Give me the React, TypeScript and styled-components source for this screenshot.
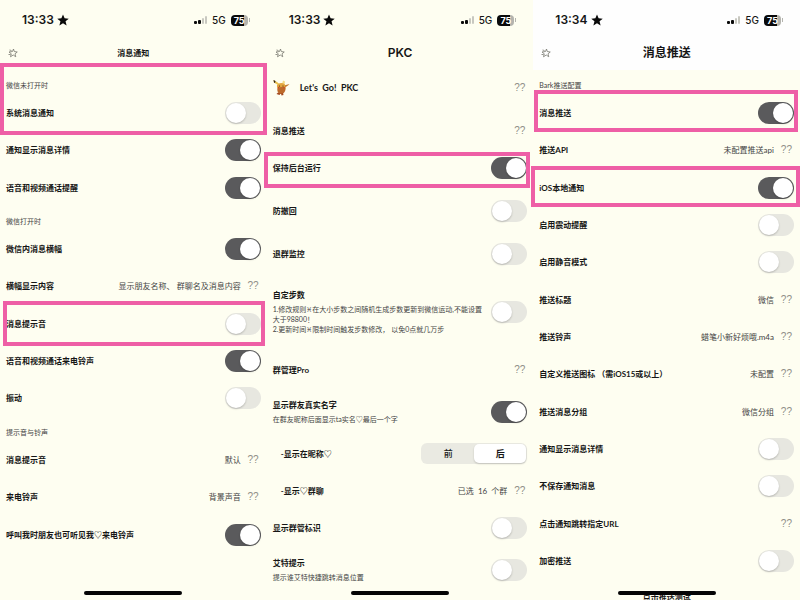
import React, { useId, useState } from "react";
import styled, { createGlobalStyle, css } from "styled-components";

const GlobalStyle = createGlobalStyle`
  *, *::before, *::after { box-sizing: border-box; }
  body {
    margin: 0;
    background: #fefef1;
    color: #161616;
    font-family: Lato, "Noto Sans CJK SC", sans-serif;
  }
  button, input { font: inherit; color: inherit; margin: 0; }
`;

const Page = styled.main`
  display: grid;
  grid-template-columns: repeat(3, 1fr);
  grid-template-rows: minmax(0, 1fr);
  height: 100vh;
  overflow: hidden;
`;

const Phone = styled.section`
  position: relative;
  min-width: 0;
`;

const Header = styled.header<{ $plain?: boolean }>`
  padding-bottom: 4px;
  background: ${(p) => (p.$plain ? "#fefefe" : "transparent")};
`;

const StatusBar = styled.div`
  display: flex;
  align-items: center;
  height: 40px;
  padding: 0 17px 0 22px;
  font-family: Inter, sans-serif;
`;

const Clock = styled.time`
  font-size: 12px;
  line-height: 16px;
  font-weight: 600;
`;

const StatusStar = styled.svg`
  width: 12px;
  height: 12px;
  margin-left: 3px;
`;

const Signal = styled.svg`
  width: 14px;
  height: 9px;
  margin-left: auto;
`;

const Network = styled.span`
  margin: 0 5px 0 4px;
  font-size: 10px;
  font-weight: 500;
`;

const Battery = styled.span`
  display: flex;
  align-items: center;
  justify-content: center;
  width: 17px;
  height: 11px;
  border-radius: 4px;
  background: linear-gradient(90deg, #0a0a0a 75%, #b4b4ae 75%);
  color: #fff;
  font-size: 9px;
  font-weight: 700;
`;

const BatteryTip = styled.span`
  width: 1px;
  height: 4px;
  margin-left: 1px;
  background: #b4b4ae;
`;

const NavBar = styled.div`
  display: grid;
  grid-template-columns: 1fr auto 1fr;
  align-items: center;
  height: 26px;
  padding: 0 8px;
`;

const BackButton = styled.button`
  display: flex;
  justify-self: start;
  padding: 0;
  border: 0;
  background: none;
`;

const Title = styled.h1<{ $large?: boolean }>`
  margin: 0;
  font-family: Inter, "Noto Sans CJK SC", sans-serif;
  font-size: ${(p) => (p.$large ? 12 : 8)}px;
  line-height: 16px;
  font-weight: 600;
`;

const SectionLabel = styled.h2`
  display: flex;
  align-items: flex-end;
  height: 24px;
  margin: 0;
  padding: 0 6px 4px;
  color: #444;
  font-size: 7px;
  line-height: 10px;
  font-weight: 400;
`;

const Group = styled.div`
  display: grid;
  grid-auto-rows: minmax(37px, auto) minmax(38px, auto) minmax(37px, auto);
`;

const Stack = styled.div`
  display: flex;
  flex-direction: column;
  gap: 6px;
  margin-top: -1px;
`;

const StackGroup = styled.div`
  display: grid;
`;

type RowStyle = { $indent?: boolean; $mark?: string; $tall?: boolean; $noted?: boolean };

const rowStyle = css<RowStyle>`
  position: relative;
  display: flex;
  align-items: center;
  width: 100%;
  min-height: ${(p) => (p.$tall ? 67 : p.$noted ? 35 : 37)}px;
  padding: 0 6px 0 ${(p) => (p.$indent ? 14 : 6)}px;
  ${(p) =>
    p.$mark &&
    css`
      &::after {
        content: "";
        position: absolute;
        z-index: 2;
        inset: ${p.$mark};
        border: 4px solid #ee5fa6;
        pointer-events: none;
      }
    `}
`;

const Row = styled.div<RowStyle>`
  ${rowStyle}
`;

const LinkRow = styled.button<RowStyle>`
  ${rowStyle}
  border: 0;
  background: none;
  text-align: left;
`;

const TextBlock = styled.div`
  flex: 1;
  min-width: 0;
`;

const RowLabel = styled.label`
  display: block;
  font-size: 8px;
  line-height: 12px;
  font-weight: 700;
  white-space: nowrap;
`;

const Note = styled.p`
  margin: 3px 0 0;
  color: #444;
  font-size: 7px;
  line-height: 10px;
  white-space: pre;
`;

const Value = styled.span`
  margin-left: auto;
  color: #444;
  font-size: 8px;
  line-height: 12px;
  white-space: nowrap;
`;

const Disclosure = styled.span`
  width: 18px;
  margin-right: 2px;
  color: #8f8f88;
  font-family: "Liberation Sans", sans-serif;
  font-size: 10px;
  line-height: 12px;
  text-align: right;
  white-space: nowrap;
`;

const AppName = styled.span`
  flex: 1;
  margin-left: 10px;
  font-size: 9px;
  line-height: 12px;
  font-weight: 700;
`;

const Switch = styled.input`
  appearance: none;
  flex: none;
  display: flex;
  align-items: center;
  width: 36px;
  height: 22px;
  padding: 1px;
  border-radius: 11px;
  background: #e7e7e0;

  &::before {
    content: "";
    width: 20px;
    height: 20px;
    border-radius: 50%;
    background: #fff;
    box-shadow: 0 1px 2px rgba(0, 0, 0, 0.22);
  }

  &:checked {
    justify-content: flex-end;
    background: #5a5a5c;
  }
`;

const Segments = styled.div`
  display: flex;
  width: 106px;
  height: 21px;
  padding: 1px;
  border-radius: 6px;
  background: #eaeae2;
`;

const Segment = styled.label`
  position: relative;
  display: flex;
  flex: 1;
  align-items: center;
  justify-content: center;
  border-radius: 5px;
  font-size: 9px;
  line-height: 12px;
  font-weight: 500;

  &:has(input:checked) {
    background: #fff;
    box-shadow: 0 1px 2px rgba(0, 0, 0, 0.18);
    font-weight: 700;
  }
`;

const SegmentInput = styled.input`
  position: absolute;
  inset: 0;
  appearance: none;
`;

const TestButton = styled.button`
  display: block;
  margin: 0 auto;
  padding: 12px 6px;
  border: 0;
  background: none;
  font-size: 8px;
  line-height: 12px;
  font-weight: 700;
`;

const HomeIndicator = styled.div`
  position: absolute;
  z-index: 3;
  bottom: 5px;
  left: 0;
  right: 0;
  width: 98px;
  height: 4px;
  margin: 0 auto;
  border-radius: 2px;
  background: #050505;
`;

function BackStar() {
  return (
    <svg width="10" height="10" viewBox="0 0 20 20" fill="none" stroke="#77776f" strokeWidth="1.6" strokeLinejoin="round">
      <path d="M11 2 L12.5 7 L18.5 8 L14 11.5 L15.5 17.5 L10.5 14 L5 17.5 L6.5 11.5 L2 8 L9 7 Z" />
      <path d="M3 4 L7 5 M1 13 L5 13" />
    </svg>
  );
}

function Mascot() {
  return (
    <svg width="17" height="17" viewBox="0 0 34 34" aria-hidden="true">
      <path d="M10 12 L2 7 L1 2 L8 6 L14 11 Z" fill="#e9c24d" />
      <path d="M1 2 L5 4 L4 8 L2 7 Z" fill="#2c2117" />
      <path d="M18 10 L20 3 L24 5 L23 12 Z" fill="#f3dc87" />
      <path d="M22 13 L33 10 L30 13 L24 17 Z" fill="#c47a2e" />
      <path d="M8 12 Q15 5 24 11 L25 19 Q20 23 12 21 Q7 18 8 12 Z" fill="#e3a63f" />
      <path d="M9 18 Q16 15 25 17 Q26 25 19 30 L14 30 Q7 26 9 18 Z" fill="#bd6a2b" />
      <path d="M10 27 L7 30 L13 32 L15 29 Z M16 29 L17 33 L21 32 L20 28 Z" fill="#a4491f" />
      <circle cx="13" cy="14" r="1.2" fill="#36210f" />
      <circle cx="20" cy="14" r="1.2" fill="#36210f" />
      <circle cx="11" cy="17" r="1.4" fill="#cf4224" />
      <circle cx="22" cy="17" r="1.4" fill="#cf4224" />
    </svg>
  );
}

function PhoneHeader({ time, title, large, plain }: { time: string; title: string; large?: boolean; plain?: boolean }) {
  return (
    <Header $plain={plain}>
      <StatusBar>
        <Clock>{time}</Clock>
        <StatusStar viewBox="0 0 24 24" aria-hidden="true">
          <path d="M12 1 L15.2 8.7 L23.5 9.3 L17.1 14.7 L19.2 22.8 L12 18.4 L4.8 22.8 L6.9 14.7 L0.5 9.3 L8.8 8.7 Z" fill="#0a0a0a" />
        </StatusStar>
        <Signal viewBox="0 0 14 9" aria-hidden="true">
          <rect x="0" y="5" width="3" height="3" rx="1" fill="#0a0a0a" />
          <rect x="4" y="4" width="3" height="4" rx="1" fill="#0a0a0a" />
          <rect x="8" y="2" width="2" height="6" rx="1" fill="#c8c8c0" />
          <rect x="11" y="0" width="2" height="8" rx="1" fill="#c8c8c0" />
        </Signal>
        <Network>5G</Network>
        <Battery>75</Battery>
        <BatteryTip />
      </StatusBar>
      <NavBar>
        <BackButton aria-label="返回">
          <BackStar />
        </BackButton>
        <Title $large={large}>{title}</Title>
      </NavBar>
    </Header>
  );
}

type ItemProps = { label: string; indent?: boolean; mark?: string };

function ToggleRow({ label, on, note, tall, indent, mark }: ItemProps & { on?: boolean; note?: string; tall?: boolean }) {
  const id = useId();
  return (
    <Row $indent={indent} $mark={mark} $tall={tall} $noted={!!note}>
      <TextBlock>
        <RowLabel htmlFor={id}>{label}</RowLabel>
        {note && <Note>{note}</Note>}
      </TextBlock>
      <Switch id={id} type="checkbox" defaultChecked={on} />
    </Row>
  );
}

function DetailRow({ label, value, indent }: ItemProps & { value?: string }) {
  return (
    <LinkRow type="button" $indent={indent}>
      <RowLabel as="span">{label}</RowLabel>
      <Value>{value}</Value>
      <Disclosure>??</Disclosure>
    </LinkRow>
  );
}

function PositionRow() {
  const [side, setSide] = useState("后");
  return (
    <Row $indent>
      <TextBlock>
        <RowLabel as="span">-显示在昵称♡</RowLabel>
      </TextBlock>
      <Segments role="radiogroup" aria-label="显示在昵称">
        {["前", "后"].map((s) => (
          <Segment key={s}>
            <SegmentInput type="radio" name="side" checked={side === s} onChange={() => setSide(s)} />
            {s}
          </Segment>
        ))}
      </Segments>
    </Row>
  );
}

const stepsNote =
  "1.修改规则♓\uFE0E在大小步数之间随机生成步数更新到微信运动,不能设置\n大于98800！\n2.更新时间♓\uFE0E限制时间触发步数修改， 以免0点就几万步";

export default function App() {
  return (
    <>
      <GlobalStyle />
      <Page>
        <Phone>
          <PhoneHeader time="13:33" title="消息通知" />
          <SectionLabel>微信未打开时</SectionLabel>
          <Group>
            <ToggleRow label="系统消息通知" mark="-31px 0 -4px 0" />
            <ToggleRow label="通知显示消息详情" on />
            <ToggleRow label="语音和视频通话提醒" on />
          </Group>
          <SectionLabel>微信打开时</SectionLabel>
          <Group>
            <ToggleRow label="微信内消息横幅" on />
            <DetailRow label="横幅显示内容" value="显示朋友名称、 群聊名及消息内容" />
            <ToggleRow label="消息提示音" mark="-4px 2px -4px 3px" />
            <ToggleRow label="语音和视频通话来电铃声" on />
            <ToggleRow label="振动" />
          </Group>
          <SectionLabel>提示音与铃声</SectionLabel>
          <Group>
            <DetailRow label="消息提示音" value="默认" />
            <DetailRow label="来电铃声" value="背景声音" />
            <ToggleRow label="呼叫我时朋友也可听见我♡来电铃声" on />
          </Group>
          <HomeIndicator />
        </Phone>

        <Phone>
          <PhoneHeader time="13:33" title="PKC" large />
          <Stack>
            <LinkRow type="button">
              <Mascot />
              <AppName>Let's&nbsp; Go!&nbsp; PKC</AppName>
              <Disclosure>??</Disclosure>
            </LinkRow>
            <StackGroup>
              <DetailRow label="消息推送" />
              <ToggleRow label="保持后台运行" on mark="3px 3px -2px -3px" />
            </StackGroup>
            <ToggleRow label="防撤回" />
            <ToggleRow label="退群监控" />
            <ToggleRow label="自定步数" note={stepsNote} tall />
            <DetailRow label="群管理Pro" />
            <ToggleRow label="显示群友真实名字" note="在群友昵称后面显示ta实名♡最后一个字" on />
            <StackGroup>
              <PositionRow />
              <DetailRow label="-显示♡群聊" value="已选&nbsp; 16&nbsp; 个群" indent />
              <ToggleRow label="显示群管标识" />
            </StackGroup>
            <ToggleRow label="艾特提示" note="提示谁艾特快捷跳转消息位置" />
          </Stack>
          <HomeIndicator />
        </Phone>

        <Phone>
          <PhoneHeader time="13:34" title="消息推送" large plain />
          <SectionLabel>Bark推送配置</SectionLabel>
          <Group>
            <ToggleRow label="消息推送" on mark="-4px 2px -1px 1px" />
            <DetailRow label="推送API" value="未配置推送api" />
            <ToggleRow label="iOS本地通知" on mark="-3px 0 -1px -2px" />
            <ToggleRow label="启用震动提醒" />
            <ToggleRow label="启用静音模式" />
            <DetailRow label="推送标题" value="微信" />
            <DetailRow label="推送铃声" value="蜡笔小新好烦哦.m4a" />
            <DetailRow label="自定义推送图标 （需iOS15或以上）" value="未配置" />
            <DetailRow label="推送消息分组" value="微信分组" />
            <ToggleRow label="通知显示消息详情" />
            <ToggleRow label="不保存通知消息" />
            <DetailRow label="点击通知跳转指定URL" />
            <ToggleRow label="加密推送" />
          </Group>
          <TestButton type="button">点击推送测试</TestButton>
          <HomeIndicator />
        </Phone>
      </Page>
    </>
  );
}
